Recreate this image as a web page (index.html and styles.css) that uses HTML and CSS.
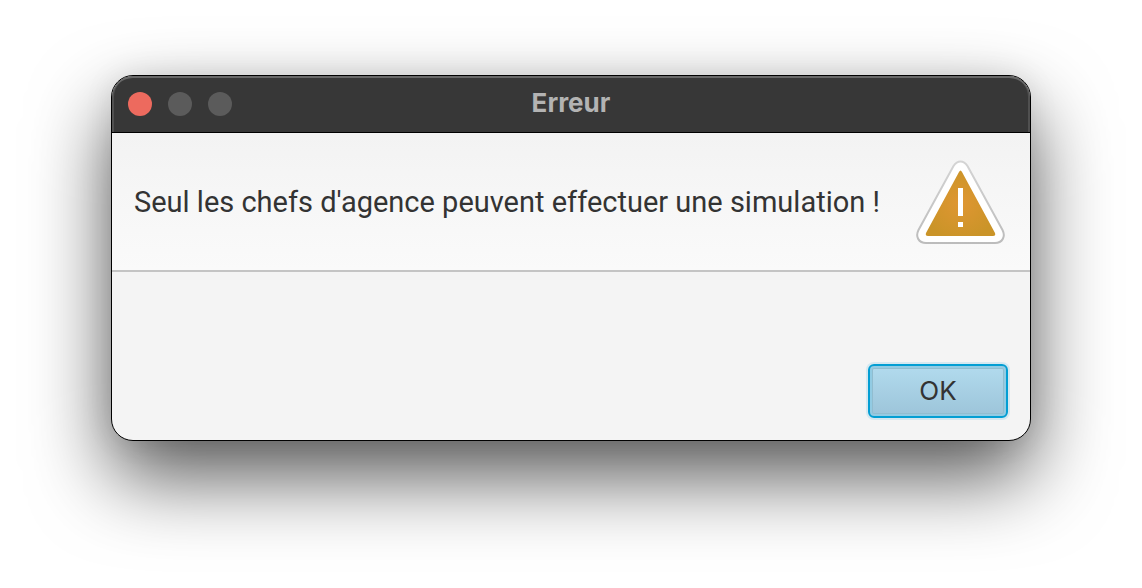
FILE: index.html
```html
<!DOCTYPE html>
<html lang="fr">
<head>
<meta charset="utf-8">
<meta name="viewport" content="width=device-width, initial-scale=1">
<title>Erreur</title>
<link rel="stylesheet" href="styles.css">
</head>
<body>
<main class="dialog" role="alertdialog" aria-labelledby="dialog-title" aria-describedby="dialog-message">
  <header class="titlebar">
    <div class="controls">
      <button class="control control-close" type="button" aria-label="Fermer"></button>
      <button class="control" type="button" aria-label="Réduire" disabled></button>
      <button class="control" type="button" aria-label="Agrandir" disabled></button>
    </div>
    <h1 class="title" id="dialog-title">Erreur</h1>
  </header>
  <section class="message-panel">
    <p class="message" id="dialog-message">Seul les chefs d'agence peuvent effectuer une simulation !</p>
    <svg class="warning-icon" viewBox="0 0 90 84" aria-hidden="true">
      <defs>
        <radialGradient id="amber" cx="0.5" cy="0.5" r="0.55">
          <stop offset="0" stop-color="#df9632"/>
          <stop offset="1" stop-color="#ca9428"/>
        </radialGradient>
        <linearGradient id="edge" x1="0" y1="0" x2="0" y2="1">
          <stop offset="0" stop-color="#d4d4d4"/>
          <stop offset="1" stop-color="#bcbcbc"/>
        </linearGradient>
      </defs>
      <path d="M37.500 6Q40.500 1.500 44.500 1.500T51.500 6L86.500 70C90 77 86 83 79 83H10C3 83-1 77 2.500 70Z" fill="#fff" stroke="url(#edge)" stroke-width="2"/>
      <path d="M43 12Q44.500 9 46 12L79 73Q80 76 77 76H12Q9 76 10 73Z" fill="url(#amber)"/>
      <path d="M42 28h5v28h-5zM42 62h5v5h-5z" fill="#fff"/>
    </svg>
  </section>
  <footer class="actions">
    <button class="ok-button" type="button">OK</button>
  </footer>
</main>
</body>
</html>
```
FILE: styles.css
```css
* {
  box-sizing: border-box;
}

body {
  min-height: 100vh;
  margin: 0;
  padding: 75px 111px;
  background: #fff;
  color: #333;
  font-family: Roboto, "Liberation Sans", sans-serif;
}

.dialog {
  border: 1px solid #000;
  border-radius: 22px;
  background: #f4f4f4;
  box-shadow: 0 36px 80px rgba(0, 0, 0, 0.66), 0 0 30px rgba(0, 0, 0, 0.08);
  overflow: hidden;
}

.titlebar {
  display: grid;
  grid-template-columns: 1fr auto 1fr;
  align-items: center;
  height: 57px;
  padding: 0 16px;
  border-bottom: 1px solid #000;
  border-radius: 21px 21px 0 0;
  background: #373737;
  box-shadow: inset 0 2px 0 #686868, inset 2px 0 0 #505050, inset -2px 0 0 #505050;
}

.controls {
  display: flex;
  gap: 16px;
}

.control {
  width: 24px;
  height: 24px;
  padding: 0;
  border: 0;
  border-radius: 50%;
  background: #5b5b5b;
}

.control-close {
  background: #ed6a5e;
}

.title {
  margin: 0;
  padding-bottom: 2px;
  color: #b3b3b3;
  font-family: Inter, sans-serif;
  font-size: 26px;
  font-weight: 700;
  line-height: 32px;
}

.message-panel {
  display: flex;
  align-items: center;
  justify-content: space-between;
  gap: 16px;
  padding: 27px 24px 26px 22px;
  border-bottom: 2px solid #c4c4c4;
  background: linear-gradient(#f3f3f3, #fafafa);
}

.message {
  margin: 0;
  font-size: 29px;
  line-height: 36px;
}

.warning-icon {
  flex: none;
  width: 90px;
  height: 84px;
}

.actions {
  display: flex;
  justify-content: flex-end;
  padding: 92px 22px 22px;
}

.ok-button {
  width: 140px;
  height: 54px;
  padding: 0;
  border: 2px solid #039ed3;
  border-radius: 6px;
  background: linear-gradient(#b2dbee, #9cc4d9);
  box-shadow: 0 0 0 2px #d5e8f0, inset 0 0 0 2px #92cbe3, inset 0 0 0 3px #91bdd0;
  color: #333;
  font-family: Inter, sans-serif;
  font-size: 26px;
  line-height: 32px;
}
```
